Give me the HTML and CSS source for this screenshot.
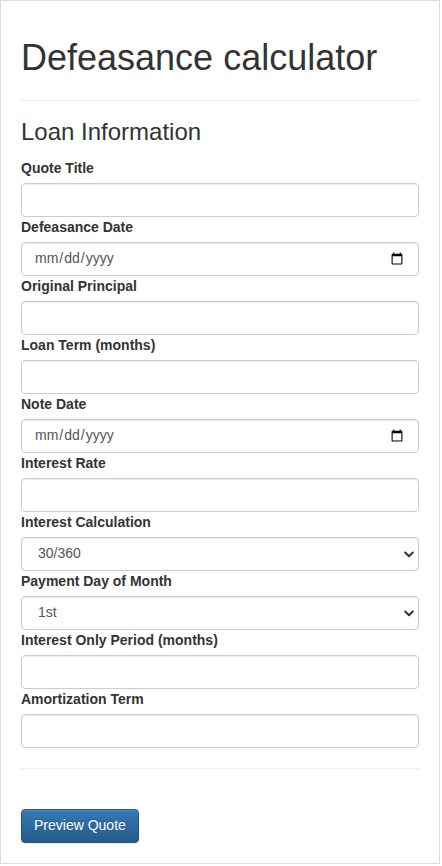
FILE: index.html
```html
<!DOCTYPE html>
<html lang="en">
<head>
<meta charset="utf-8">
<title>Defeasance calculator</title>
<link rel="stylesheet" href="styles.css">
</head>
<body>
<div class="panel">
  <h1 class="title">Defeasance calculator</h1>
  <hr class="rule">
  <h3 class="section">Loan Information</h3>
  <form class="form">
    <div class="group">
      <label class="label" for="qt">Quote Title</label>
      <input class="control" id="qt" type="text">
    </div>
    <div class="group">
      <label class="label" for="dd">Defeasance Date</label>
      <input class="control" id="dd" type="date">
    </div>
    <div class="group">
      <label class="label" for="op">Original Principal</label>
      <input class="control" id="op" type="text">
    </div>
    <div class="group">
      <label class="label" for="lt">Loan Term (months)</label>
      <input class="control" id="lt" type="text">
    </div>
    <div class="group">
      <label class="label" for="nd">Note Date</label>
      <input class="control" id="nd" type="date">
    </div>
    <div class="group">
      <label class="label" for="ir">Interest Rate</label>
      <input class="control" id="ir" type="text">
    </div>
    <div class="group">
      <label class="label" for="ic">Interest Calculation</label>
      <div class="select-wrap">
        <select class="control select" id="ic">
          <option>30/360</option>
          <option>Actual/360</option>
          <option>Actual/365</option>
        </select>
        <svg class="chevron" width="10" height="7" viewBox="0 0 10 7" aria-hidden="true"><polyline points="1.2,1.5 5,5.2 8.8,1.5" fill="none" stroke="#333" stroke-width="2" stroke-linecap="round" stroke-linejoin="round"/></svg>
      </div>
    </div>
    <div class="group">
      <label class="label" for="pd">Payment Day of Month</label>
      <div class="select-wrap">
        <select class="control select" id="pd">
          <option>1st</option>
          <option>15th</option>
        </select>
        <svg class="chevron" width="10" height="7" viewBox="0 0 10 7" aria-hidden="true"><polyline points="1.2,1.5 5,5.2 8.8,1.5" fill="none" stroke="#333" stroke-width="2" stroke-linecap="round" stroke-linejoin="round"/></svg>
      </div>
    </div>
    <div class="group">
      <label class="label" for="io">Interest Only Period (months)</label>
      <input class="control" id="io" type="text">
    </div>
    <div class="group">
      <label class="label" for="at">Amortization Term</label>
      <input class="control" id="at" type="text">
    </div>
    <hr class="rule rule-bottom">
    <div class="actions">
      <button class="btn" type="button">Preview Quote</button>
    </div>
  </form>
</div>
</body>
</html>
```
FILE: styles.css
```css
html, body {
  margin: 0;
  padding: 0;
  background: #fff;
}
body {
  font-family: "Liberation Sans", Arial, Helvetica, sans-serif;
  font-size: 14px;
  line-height: 1.42857;
  color: #333;
}
.panel {
  box-sizing: border-box;
  width: 440px;
  height: 864px;
  border: 1px solid #ddd;
  padding: 0 20px 20px;
  display: flex;
  flex-direction: column;
  overflow: hidden;
}
.title {
  font-size: 36px;
  font-weight: 500;
  line-height: 1.1;
  margin: 17px 0 0;
  padding-top: 20px;
}
.rule {
  border: 0;
  border-top: 1px solid #eee;
  margin: 22px 0 0;
  height: 0;
}
.section {
  font-size: 24px;
  font-weight: 500;
  line-height: 1.1;
  margin: 18px 0 13px;
}
.form {
  display: flex;
  flex-direction: column;
}
.group {
  display: flex;
  flex-direction: column;
}
.label {
  font-weight: 700;
  line-height: 20px;
  margin-bottom: 5px;
}
.control {
  box-sizing: border-box;
  display: block;
  width: 100%;
  height: 34px;
  padding: 6px 12px;
  font-family: "Liberation Sans", Arial, Helvetica, sans-serif;
  font-size: 14px;
  line-height: 1.42857;
  color: #555;
  background-color: #fff;
  border: 1px solid #ccc;
  border-radius: 4px;
  box-shadow: inset 0 1px 1px rgba(0,0,0,.075);
  margin: 0;
}
.select-wrap {
  position: relative;
}
.select {
  -webkit-appearance: none;
  appearance: none;
  padding: 6px 28px 6px 16px;
}
.chevron {
  position: absolute;
  right: 5px;
  top: 14px;
  pointer-events: none;
}
.rule-bottom {
  margin: 20px 0 0;
}
.actions {
  margin-top: 40px;
}
.btn {
  display: inline-block;
  height: 34px;
  padding: 6px 12px;
  font-family: "Liberation Sans", Arial, Helvetica, sans-serif;
  font-size: 14px;
  line-height: 1.42857;
  color: #fff;
  background-image: linear-gradient(to bottom, #337ab7 0, #265a88 100%);
  border: 1px solid #245580;
  border-radius: 4px;
  text-shadow: 0 -1px 0 rgba(0,0,0,.2);
  box-shadow: inset 0 1px 0 rgba(255,255,255,.15), 0 1px 1px rgba(0,0,0,.075);
  cursor: pointer;
}
```
